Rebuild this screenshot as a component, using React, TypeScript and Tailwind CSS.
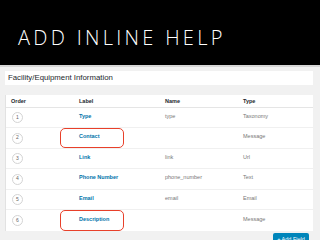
const rows = [
  { n: 1, label: 'Type', name: 'type', type: 'Taxonomy', mark: false },
  { n: 2, label: 'Contact', name: '', type: 'Message', mark: true },
  { n: 3, label: 'Link', name: 'link', type: 'Url', mark: false },
  { n: 4, label: 'Phone Number', name: 'phone_number', type: 'Text', mark: false },
  { n: 5, label: 'Email', name: 'email', type: 'Email', mark: false },
  { n: 6, label: 'Description', name: '', type: 'Message', mark: true },
]

export default function App() {
  return (
    <div className="w-[320px] h-[240px] overflow-hidden bg-[#f1f1f1] font-['Liberation_Sans',Arial,sans-serif]">
      {/* Slide title */}
      <div className="h-[65px] bg-black flex items-center pl-[18px] pt-[10px]">
        <h1 className="text-white text-[20px] font-light tracking-[3.3px] font-['Open_Sans',sans-serif] leading-none">
          ADD INLINE HELP
        </h1>
      </div>
      <div className="h-[2px] bg-[#d6d6d6]" />

      <div className="pl-[5px] pr-[7px] pt-[4px]">
        {/* Section title */}
        <div className="h-[14px] bg-white flex items-center pl-[3px]">
          <span className="text-[7.8px] text-[#23282d]">Facility/Equipment Information</span>
        </div>

        {/* Field table */}
        <div className="mt-[10px] bg-white border-l border-[#e2e2e2]">
          <div className="h-[13px] flex items-center text-[5.5px] font-bold text-[#23282d] border-b border-[#e5e5e5]">
            <span className="w-[73px] pl-[5px]">Order</span>
            <span className="w-[86px]">Label</span>
            <span className="w-[78px]">Name</span>
            <span>Type</span>
          </div>
          {rows.map((r, i) => (
            <div
              key={r.n}
              className={`${i % 2 ? 'h-[21px]' : 'h-[20px]'} flex items-center text-[5.5px] ${i < rows.length - 1 ? 'border-b border-[#f0f0f0]' : ''}`}
            >
              <div className="w-[73px] pl-[6px]">
                <div className="w-[11px] h-[11px] rounded-full border border-[#d4d4d4] flex items-center justify-center text-[5px] text-[#666]">
                  {r.n}
                </div>
              </div>
              <div className="w-[86px] relative h-full flex items-center">
                <span className="text-[#0073aa] font-bold -mt-[3px]">{r.label}</span>
                {r.mark && (
                  <div className="absolute left-[-19px] top-0 w-[64px] h-full rounded-[5px] border-[1.5px] border-[#e8402a]" />
                )}
              </div>
              <span className="w-[78px] text-[#777] -mt-[3px]">{r.name}</span>
              <span className="text-[#777] -mt-[3px]">{r.type}</span>
            </div>
          ))}
        </div>

        <div className="flex justify-end pr-[4px] mt-[2px]">
          <button className="w-[36px] h-[12px] bg-[#0085ba] text-white text-[5.5px] rounded-[2px] flex items-center justify-center">
            + Add Field
          </button>
        </div>
      </div>
    </div>
  )
}
